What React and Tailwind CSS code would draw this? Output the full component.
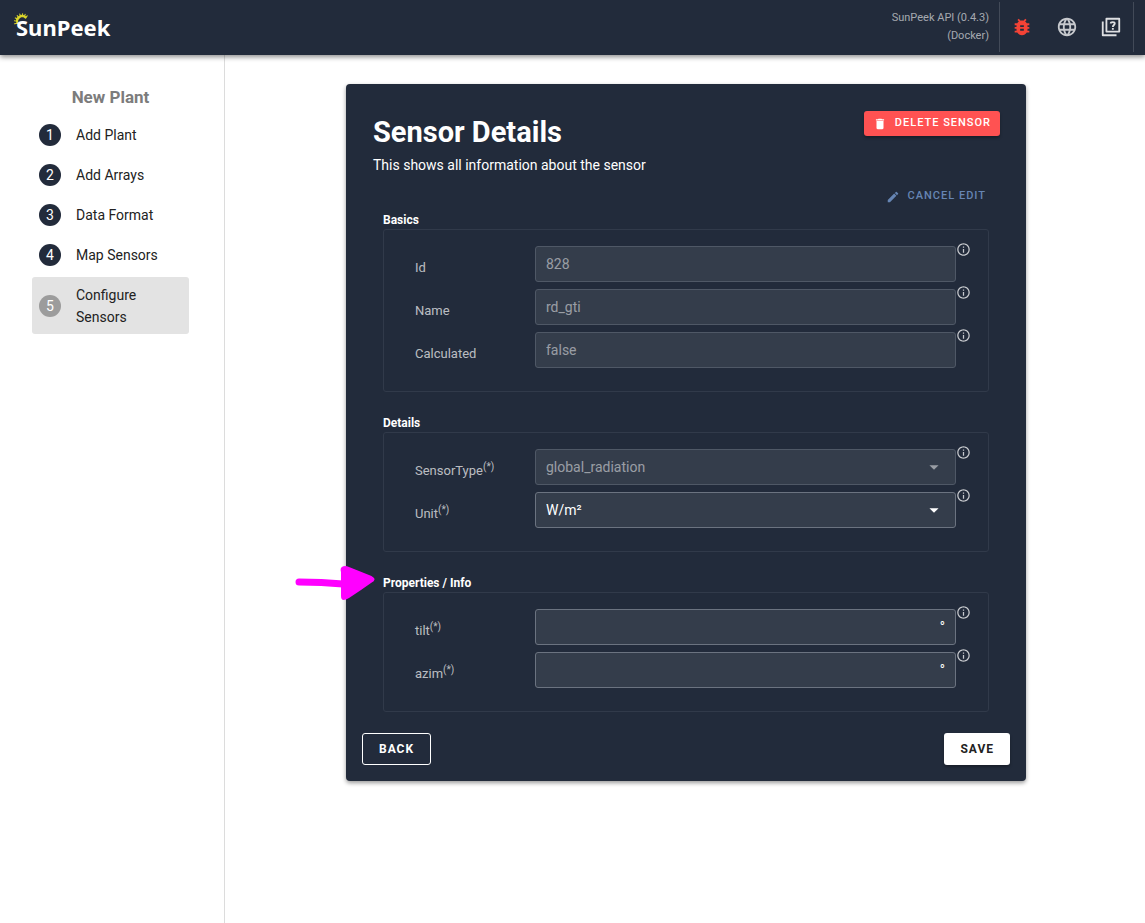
import React from 'react';
import { MdArrowDropDown, MdBugReport, MdDelete, MdEdit, MdLanguage, MdOutlineInfo } from 'react-icons/md';

const steps = ['Add Plant', 'Add Arrays', 'Data Format', 'Map Sensors', 'Configure Sensors'];

const Logo = () => (
  <a href="#" className="relative ml-4 text-white text-[22px] leading-8 font-bold" style={{ fontFamily: "'Noto Sans', sans-serif" }}>
    <svg className="absolute -left-0.5 top-0.5 w-4 h-4" viewBox="0 0 16 16" fill="none" stroke="#d9d42a" strokeWidth="1.1" strokeLinecap="round">
      <path d="M0.6 10.8l3-0.6M0.4 7.8l3 0.4M1.3 4.9l2.8 1.4M3.2 2.6l2 2.4M5.8 1.1l1 3M8.6 0.7v3M11.2 1.4l-1 2.6M13.2 2.8l-1.8 2" />
      <path d="M3.5 10a5 5 0 0 1 8-5.6" strokeWidth="2.2" />
    </svg>
    <span className="relative">SunPeek</span>
  </a>
);

const HelpIcon = () => (
  <svg className="w-[22px] h-[22px]" viewBox="0 0 24 24" fill="none" stroke="currentColor" strokeWidth="2">
    <path d="M7 3H21V17H7Z" strokeLinejoin="round" />
    <path d="M3 6V21H18" strokeLinejoin="round" />
    <path d="M11.7 8.2C11.7 6.2 16.1 6.1 16.1 8.3C16.1 9.8 14 9.9 14 11.9M14 13.1V15" />
  </svg>
);

const Header = () => (
  <header className="relative z-10 flex items-center justify-between h-[55px] pb-0.5 bg-[#222b3b] shadow-[0_2px_5px_rgba(0,0,0,0.45)]">
    <Logo />
    <div className="flex items-center mr-[11px] text-white/85">
      <div className="pr-2.5 text-right text-[11px] leading-[18px] text-white/60">
        <div>SunPeek API (0.4.3)</div>
        <div>(Docker)</div>
      </div>
      <div className="flex items-center h-[50px] border-x border-white/15">
        <button aria-label="Report a bug" className="w-11 h-11 flex items-center justify-center text-[#f44336]"><MdBugReport size={22} /></button>
        <button aria-label="Language" className="w-[45px] h-11 flex items-center justify-center text-white/75"><MdLanguage size={22} /></button>
        <button aria-label="Help" className="w-11 h-11 flex items-center justify-center"><HelpIcon /></button>
      </div>
    </div>
  </header>
);

const Sidebar = () => (
  <nav className="w-[225px] shrink-0 border-r border-[#dcdcdc] pt-[31px] pl-8 pr-[35px]">
    <h2 className="text-center text-[17px] leading-[22px] font-bold text-[#7c7c7c] mb-[7px]">New Plant</h2>
    <ol>
      {steps.map((step, i) => {
        const active = i === steps.length - 1;
        return (
          <li key={step}>
            <a
              href="#"
              className={`flex items-center gap-[15px] pl-[7px] pr-6 text-[14px] leading-[22px] text-[#222] rounded-[3px] ${active ? 'bg-[#e3e3e3] mt-0.5 h-[57px]' : 'h-10'}`}
            >
              <span className={`w-[22px] h-[22px] shrink-0 rounded-full text-center text-white ${active ? 'bg-[#9c9c9c]' : 'bg-[#222b3b]'}`}>{i + 1}</span>
              <span>{step}</span>
            </a>
          </li>
        );
      })}
    </ol>
  </nav>
);

const Section = ({ title, children }) => (
  <section>
    <h3 className="pt-0.5 text-[12px] leading-[18px] font-bold text-white">{title}</h3>
    <div className="flex flex-col gap-[7px] border border-[#313a4a] rounded-[3px] pt-4 pb-[23px] pl-[31px] pr-[17px]">
      {children}
    </div>
  </section>
);

const Field = ({ id, label, value = '', required, disabled, options, suffix }) => {
  const text = disabled ? 'text-white/50' : 'text-white';
  return (
    <div className="flex items-start">
      <label htmlFor={id} className="w-[120px] shrink-0 pt-3 text-[13px] leading-5 text-white/70">
        {label}
        {required && <sup className="text-[10px]">(*)</sup>}
      </label>
      <div className={`relative flex flex-1 min-w-0 h-9 border rounded-[3px] bg-[#343d4b] text-[14px] ${text} ${disabled ? 'border-[#4f5866]' : 'border-[#6b7380]'}`}>
        {options ? (
          <>
            <select id={id} disabled={disabled} defaultValue={value} className="appearance-none w-full px-2.5 opacity-100 outline-none">
              {options.map((o) => <option key={o}>{o}</option>)}
            </select>
            <MdArrowDropDown size={22} className="absolute right-2.5 top-1.5 pointer-events-none" />
          </>
        ) : (
          <input id={id} type="text" disabled={disabled} defaultValue={value} className="flex-1 min-w-0 px-2.5 outline-none" />
        )}
        {suffix && <span className="pr-2.5 leading-[34px]">{suffix}</span>}
      </div>
      <MdOutlineInfo size={15} className="shrink-0 -mt-1 text-white/75" />
    </div>
  );
};

// hand-drawn marker pointing at the properties section
const Marker = () => (
  <svg className="absolute -left-[88px] -top-2 w-20 h-10" viewBox="0 0 80 40">
    <path d="M4 18C18 18 32 18.5 48 20" fill="none" stroke="#f0f" strokeWidth="7" strokeLinecap="round" />
    <path d="M46 8C44 2 50 1 54 3L74 11Q84 15 76 19L66 26L54 34Q46 39 46 32Z" fill="#f0f" />
  </svg>
);

export default function App() {
  return (
    <div className="min-h-screen flex flex-col bg-white" style={{ fontFamily: 'Roboto, sans-serif' }}>
      <Header />
      <div className="flex flex-1">
        <Sidebar />
        <main className="flex-1 min-w-0 pt-[29px] pb-8 pl-0.5">
          <form className="max-w-[680px] mx-auto p-4 rounded bg-[#222b3b] text-white shadow-[0_2px_4px_rgba(0,0,0,0.4)]">
            <div className="flex items-start justify-between pt-[11px] pl-[11px] pr-2.5">
              <div className="pt-0.5">
                <h1 className="text-[29px] leading-[38px] font-bold">Sensor Details</h1>
                <p className="text-[14px] leading-7">This shows all information about the sensor</p>
              </div>
              <button type="button" className="flex items-center h-[25px] px-[9px] rounded-[3px] bg-[#ff5252] text-[11px] font-medium tracking-[1px] shadow-[0_2px_3px_rgba(0,0,0,0.3)]">
                <MdDelete size={14} className="mr-2" />
                DELETE SENSOR
              </button>
            </div>

            <div className="flex justify-end pr-6 pt-[5px]">
              <button type="button" className="flex items-center h-[25px] text-[11px] font-medium tracking-[1px] text-[#6685b3]">
                <MdEdit size={14} className="mr-2" />
                CANCEL EDIT
              </button>
            </div>

            <div className="flex flex-col gap-5 mx-[21px]">
              <Section title="Basics">
                <Field id="id" label="Id" value="828" disabled />
                <Field id="name" label="Name" value="rd_gti" disabled />
                <Field id="calculated" label="Calculated" value="false" disabled />
              </Section>
              <Section title="Details">
                <Field id="type" label="SensorType" value="global_radiation" options={['global_radiation']} required disabled />
                <Field id="unit" label="Unit" value="W/m²" options={['W/m²']} required />
              </Section>
              <div className="relative">
                <Marker />
                <Section title="Properties / Info">
                  <Field id="tilt" label="tilt" suffix="°" required />
                  <Field id="azim" label="azim" suffix="°" required />
                </Section>
              </div>
            </div>

            <div className="flex justify-between mt-[21px] text-[12px] font-bold tracking-[1px]">
              <button type="button" className="h-8 px-4 border border-white rounded-[3px]">BACK</button>
              <button type="submit" className="h-8 px-4 rounded-[3px] bg-white text-[#222] shadow-[0_2px_3px_rgba(0,0,0,0.3)]">SAVE</button>
            </div>
          </form>
        </main>
      </div>
    </div>
  );
}
